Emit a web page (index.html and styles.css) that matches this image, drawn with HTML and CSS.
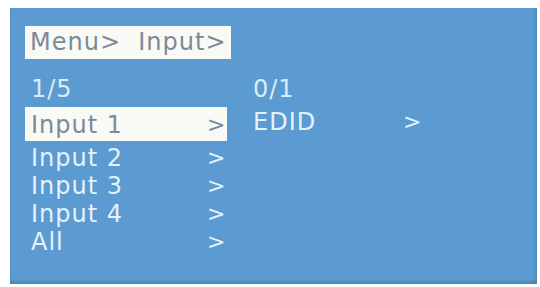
FILE: index.html
```html
<!DOCTYPE html>
<html>
<head>
<meta charset="utf-8">
<link rel="stylesheet" href="styles.css">
</head>
<body>
<div class="screen">
  <div class="crumb">Menu&gt;  Input&gt;</div>
  <div class="cols">
    <div class="list">
      <div class="row page">1/5</div>
      <div class="row sel"><span>Input 1</span><span class="arr">&gt;</span></div>
      <div class="row"><span>Input 2</span><span class="arr">&gt;</span></div>
      <div class="row"><span>Input 3</span><span class="arr">&gt;</span></div>
      <div class="row"><span>Input 4</span><span class="arr">&gt;</span></div>
      <div class="row"><span>All</span><span class="arr">&gt;</span></div>
    </div>
    <div class="sub">
      <div class="row page">0/1</div>
      <div class="row item"><span>EDID</span><span class="arr">&gt;</span></div>
    </div>
  </div>
</div>
</body>
</html>
```
FILE: styles.css
```css
html, body {
  margin: 0;
  padding: 0;
  background: #ffffff;
}
body {
  width: 540px;
  height: 287px;
  overflow: hidden;
  font-family: "DejaVu Sans", sans-serif;
}
.screen {
  margin: 8px 3px 0 10px;
  height: 276px;
  box-sizing: border-box;
  padding: 18px 0 0 15px;
  background: #5b9bd2;
  box-shadow: inset 0 -4px 3px -1px rgba(60, 110, 150, 0.45), inset -3px 0 3px -1px rgba(60, 110, 150, 0.35);
  color: #e6f2fb;
  font-size: 24px;
  letter-spacing: 1px;
}
.crumb {
  width: 206px;
  box-sizing: border-box;
  padding: 2px 0 3px 5px;
  line-height: 28px;
  height: 33px;
  background: #f9f9f6;
  color: #7c8a98;
  white-space: pre;
}
.cols {
  display: flex;
  margin-top: 16px;
}
.list {
  width: 202px;
}
.row {
  display: grid;
  grid-template-columns: 176px auto;
  line-height: 28px;
  height: 28px;
  padding-left: 6px;
}
.row.page {
  margin-bottom: 4px;
  color: #d9ecf9;
}
.row.sel {
  height: 34px;
  box-sizing: border-box;
  padding-top: 4px;
  background: #f9f9f6;
  color: #7c8a98;
  margin-bottom: 3px;
}
.arr {
  font-size: 22px;
}
.sub {
  margin-left: 26px;
  width: 180px;
}
.sub .row {
  grid-template-columns: 150px auto;
  padding-left: 0;
}
.sub .row.page {
  margin-bottom: 5px;
}
```
